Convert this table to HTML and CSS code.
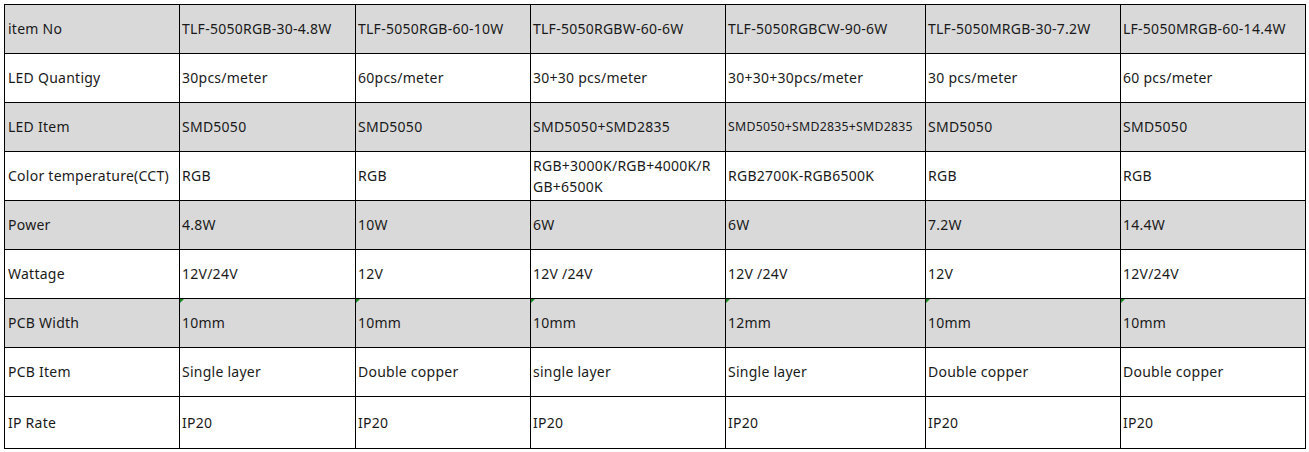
FILE: index.html
```html
<!DOCTYPE html>
<html>
<head>
<meta charset="utf-8">
<link rel="stylesheet" href="styles.css">
</head>
<body>
<div class="sheet">
<table class="spec">
  <colgroup>
    <col class="c1"><col class="c2"><col class="c3"><col class="c4"><col class="c5"><col class="c6"><col class="c7">
  </colgroup>
  <tr class="gray">
    <td>item No</td><td>TLF-5050RGB-30-4.8W</td><td>TLF-5050RGB-60-10W</td><td>TLF-5050RGBW-60-6W</td><td>TLF-5050RGBCW-90-6W</td><td>TLF-5050MRGB-30-7.2W</td><td>LF-5050MRGB-60-14.4W</td>
  </tr>
  <tr>
    <td>LED Quantigy</td><td>30pcs/meter</td><td>60pcs/meter</td><td>30+30 pcs/meter</td><td>30+30+30pcs/meter</td><td>30 pcs/meter</td><td>60 pcs/meter</td>
  </tr>
  <tr class="gray">
    <td>LED Item</td><td>SMD5050</td><td>SMD5050</td><td>SMD5050+SMD2835</td><td class="small">SMD5050+SMD2835+SMD2835</td><td>SMD5050</td><td>SMD5050</td>
  </tr>
  <tr>
    <td>Color temperature(CCT)</td><td>RGB</td><td>RGB</td><td class="wrap">RGB+3000K/RGB+4000K/R<br>GB+6500K</td><td>RGB2700K-RGB6500K</td><td>RGB</td><td>RGB</td>
  </tr>
  <tr class="gray">
    <td>Power</td><td>4.8W</td><td>10W</td><td>6W</td><td>6W</td><td>7.2W</td><td>14.4W</td>
  </tr>
  <tr>
    <td>Wattage</td><td>12V/24V</td><td>12V</td><td>12V /24V</td><td>12V /24V</td><td>12V</td><td>12V/24V</td>
  </tr>
  <tr class="gray">
    <td>PCB Width</td><td class="flag">10mm</td><td class="flag">10mm</td><td class="flag">10mm</td><td class="flag">12mm</td><td class="flag">10mm</td><td class="flag">10mm</td>
  </tr>
  <tr>
    <td>PCB Item</td><td>Single layer</td><td>Double copper</td><td>single layer</td><td>Single layer</td><td>Double copper</td><td>Double copper</td>
  </tr>
  <tr class="last">
    <td>IP Rate</td><td>IP20</td><td>IP20</td><td>IP20</td><td>IP20</td><td>IP20</td><td>IP20</td>
  </tr>
</table>
</div>
</body>
</html>
```

FILE: styles.css
```css
html, body {
  margin: 0;
  padding: 0;
  background: #ffffff;
}

.sheet {
  padding: 4px 0 0 4px;
  width: 1309px;
  height: 452px;
  box-sizing: border-box;
}

.spec {
  border-collapse: collapse;
  table-layout: fixed;
  width: 1301px;
  font-family: "Noto Sans", "Open Sans", sans-serif;
  font-size: 14px;
  letter-spacing: 0.25px;
  color: #1a1a1a;
  background: #fff;
}

.c1 { width: 175px; }
.c2 { width: 176px; }
.c3 { width: 175px; }
.c4 { width: 195px; }
.c5 { width: 200px; }
.c6 { width: 195px; }
.c7 { width: 185px; }

.spec td {
  border: 1px solid #000;
  height: 47px;
  padding: 0 0 1px 2px;
  vertical-align: middle;
  white-space: nowrap;
  line-height: 21px;
  position: relative;
}

.spec td:first-child {
  padding-left: 3px;
}

.spec tr.gray td {
  background: #d9d9d9;
}

.spec tr.last td {
  height: 50px;
}

.spec td.small {
  font-size: 12.3px;
}

.spec td.flag::before {
  content: "";
  position: absolute;
  left: 0;
  top: 0;
  width: 0;
  height: 0;
  border-top: 4px solid #1a8a1a;
  border-right: 4px solid transparent;
}
```
